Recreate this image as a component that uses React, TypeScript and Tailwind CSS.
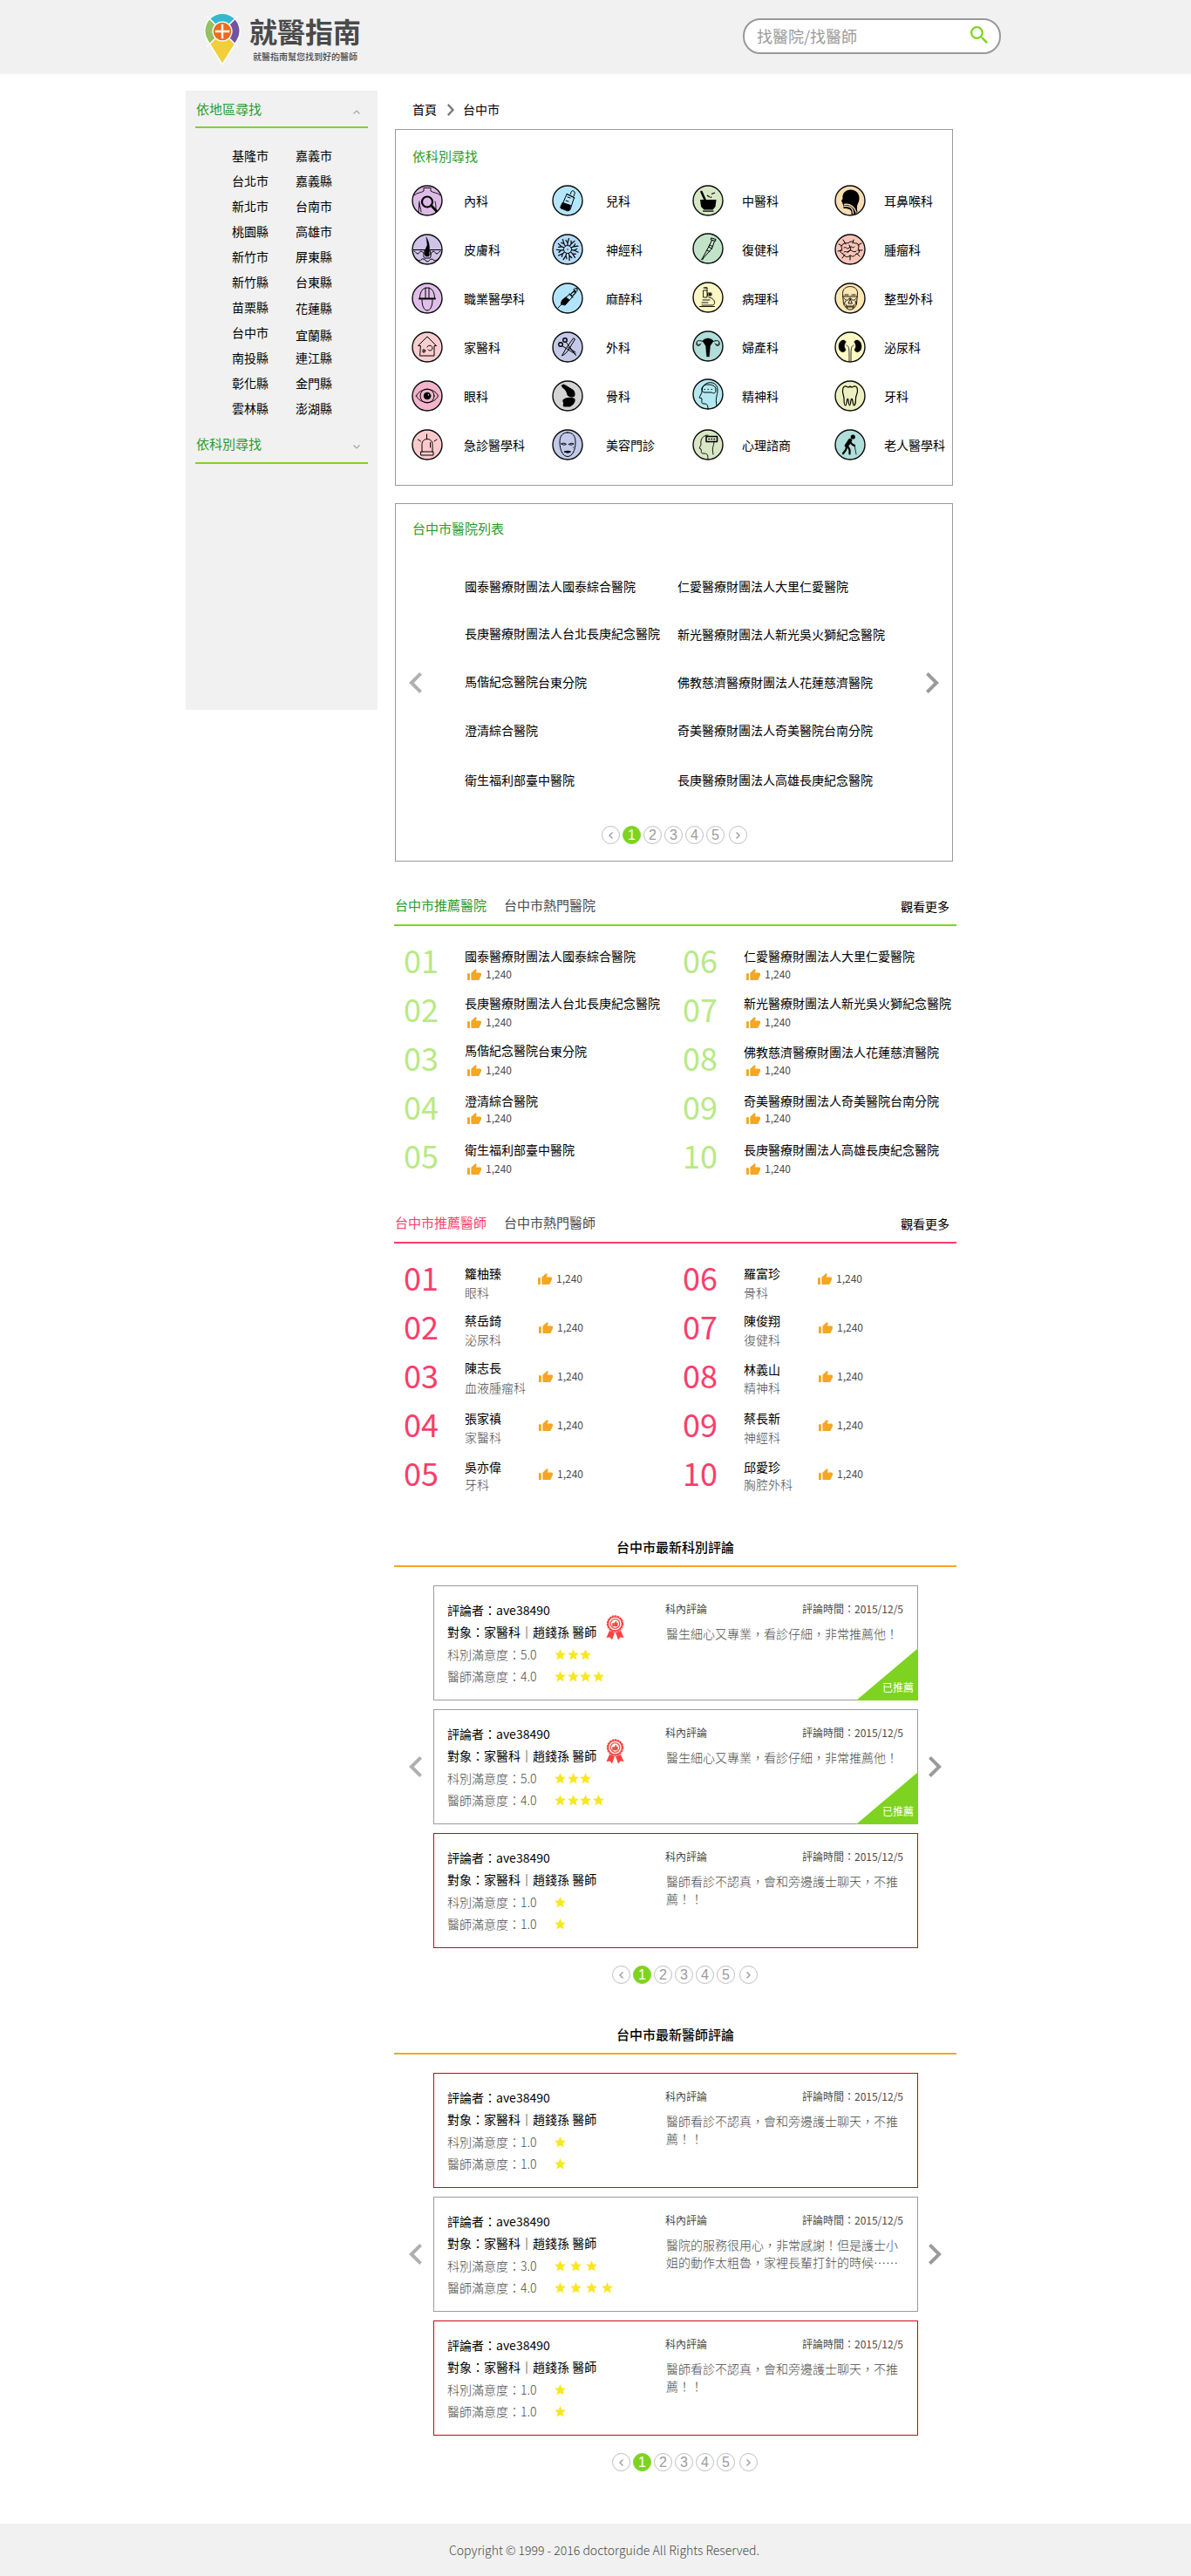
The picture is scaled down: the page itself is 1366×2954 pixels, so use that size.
import React from "react";

type Dept = { name: string; color: string; art: React.ReactNode; nudge?: string };

const k = { fill: "none", stroke: "#000", strokeWidth: 1, strokeLinecap: "round" as const, strokeLinejoin: "round" as const };

const nerveSpokes = [0, 33, 65, 98, 131, 164, 196, 229, 262, 295, 327];

const columns: { cell: string; label: string; items: Dept[] }[] = [
  {
    cell: "w-[161px] shrink-0",
    label: "ml-6",
    items: [
      {
        name: "內科",
        color: "#debbe6",
        art: (
          <g {...k}>
            <path d="M3 12c2-3 9-3 11-5V3.500h8V7c2 2 9 2 11 5M8 32l1-13M11 31c0-4-2-6-2-10M28 31c0-4 0-9-1-12" strokeWidth=".9" />
            <circle cx="18" cy="19.500" r="6" strokeWidth="2.200" />
            <path d="M22.500 23.500l6 6.500" strokeWidth="2.600" />
          </g>
        ),
      },
      {
        name: "皮膚科",
        color: "#d0c3e8",
        art: (
          <g {...k}>
            <path d="M2 18.500h14M21 18.500h13M3 20c2 0 2 3 4 3s2-3 4-3 3 4 5 4M33 20c-2 0-2 3-4 3s-2-3-4-3-2 4-4 4" />
            <path d="M17 4c4 7 4 12 3 22h-4c-2-6 1-10 2-13z" fill="#000" strokeWidth=".4" />
            <path d="M15 19c-1 4-2 8 0 9h6c2-2 1-6 0-9M5 29c2 0 2 2 4 2s2-3 5-2 2 3 4 3 3-3 5-3 2 2 4 2 2-2 4-2" />
          </g>
        ),
      },
      {
        name: "職業醫學科",
        color: "#e0bee9",
        art: (
          <g {...k}>
            <path d="M9.500 18c0-7 3-12 8.500-12s8.500 5 8.500 12M16 6v12M20 6v12M12 20c0 8 3 12 6 12s6-4 6-12" />
            <path d="M9 18.500h18" strokeWidth="2" />
          </g>
        ),
      },
      {
        name: "家醫科",
        color: "#facdd0",
        art: (
          <g {...k}>
            <path d="M10 16.500H7.500L18 6l10.500 10.500H26V28H10z" />
            <path d="M18 18c1-3 6-2 6 1s-3 4-5 2M13 21c2-1 3 1 2 3h-2v-2h3" strokeDasharray="2 .8" />
          </g>
        ),
      },
      {
        name: "眼科",
        color: "#f3b5cc",
        art: (
          <g {...k}>
            <path d="M5.500 18C10 8 26 8 30.500 18 26 28 10 28 5.500 18z" />
            <circle cx="18" cy="18" r="8" />
            <circle cx="18" cy="18" r="3.800" fill="#000" />
            <circle cx="19.400" cy="16.700" r=".7" fill="#fff" stroke="none" />
          </g>
        ),
      },
      {
        name: "急診醫學科",
        color: "#fbcacd",
        art: (
          <g {...k}>
            <path d="M12 26V17.500c0-8 12-8 12 0V26M11 26h14v4H11zM17.500 6v4.500M7.500 12l3 2M29 12l-3 2M21.500 15.500V21" />
          </g>
        ),
      },
    ],
  },
  {
    cell: "w-[161px] shrink-0",
    label: "ml-[26px]",
    items: [
      {
        name: "兒科",
        color: "#b4e6fb",
        art: (
          <g {...k}>
            <path d="M17.500 10.500l8 4-4.500 14-3 1.500-7.500-3z" />
            <path d="M12.500 20.500l9 3-2 6-9.500-3.500z" fill="#000" />
            <path d="M17 10.500l9 4.500M21.500 10.500c0-6 6-4 4.500 0L25 13M18 14l3 1M16 18l3 1" />
          </g>
        ),
      },
      {
        name: "神經科",
        color: "#b3daf8",
        art: (
          <g {...k}>
            <circle cx="18" cy="18" r="4.500" strokeDasharray="2 .6" />
            <circle cx="18" cy="18" r=".7" fill="#000" stroke="none" />
            {nerveSpokes.map((a) => (
              <path key={a} d="M18 13v-2.500l-2-3M18 10.500l1.500-5" transform={`rotate(${a} 18 18)`} strokeWidth="1.200" />
            ))}
          </g>
        ),
      },
      {
        name: "麻醉科",
        color: "#b2e5fb",
        art: (
          <g {...k}>
            <path d="M7 29l4-4M12 20l9-7 3 3-9 10-4-1z" />
            <path d="M12 20l4-3 4 3-5 5-4-1z" fill="#000" />
            <path d="M20 13l4 4M22 13l3-3 2 2-3 3M25 8l3 3M26 7l3-.5v3" strokeWidth="1.100" />
          </g>
        ),
      },
      {
        name: "外科",
        color: "#c4c9e9",
        art: (
          <g {...k}>
            <circle cx="10" cy="15" r="2.300" strokeWidth="1.400" />
            <circle cx="15" cy="10" r="2.300" strokeWidth="1.400" />
            <path d="M11.500 16.500L27 26M16 12l11.500 15.500M18 18l9 6" />
            <path d="M25 8l1.500 1-8 13c-2 3-5 5-7 6l5-9z" />
          </g>
        ),
      },
      {
        name: "骨科",
        color: "#d4d4d4",
        art: (
          <g>
            <path d="M10.500 6l3-1.500 3 1.500 8 5c2 2 3 6 1 8-3 1-7 0-8-2-1-4-2-6-5-8z" />
            <path d="M15.500 20.500c5-1 9-1 11 1 1 4-3 8-6 9h-7l-1-2c2-2-1-4 0-6z" />
          </g>
        ),
      },
      {
        name: "美容門診",
        color: "#c2c9e9",
        art: (
          <g {...k}>
            <path d="M18 4c6 0 9 4 9 11 0 10-4 16.500-9 16.500S9 25 9 15C9 8 12 4 18 4z" />
            <path d="M11 17c2-1.500 4-1 5.500.5-2 1-4 1-5.500-.5zM19.500 17.500c2-1.500 4-1.500 5.500-.5-2 1.500-4 1.500-5.500.5z" />
            <path d="M14.500 26c2-1 5-1 7 0-2 1.500-5 1.500-7 0z" fill="#000" />
            <circle cx="24.500" cy="21" r=".6" fill="#000" stroke="none" />
          </g>
        ),
      },
    ],
  },
  {
    cell: "w-[163px] shrink-0",
    label: "ml-[21px]",
    items: [
      {
        name: "中醫科",
        color: "#d8e8c5",
        art: (
          <g>
            <path d="M9 17h18.500l-1 8-3 3.500h-10L10 25z" />
            <path d="M10.500 8l4 9" stroke="#000" strokeWidth="2.600" strokeLinecap="round" />
            <path d="M12 30.200h12.500M17 12l3 2M21 15l1-1.500M22 10.500l4-1.500" stroke="#000" strokeWidth="1.200" />
          </g>
        ),
      },
      {
        name: "復健科",
        color: "#c3e3c9",
        nudge: "-translate-y-px",
        art: (
          <g {...k}>
            <path d="M22 6l5 1.500-.5 2-5-1.500zM22.500 8.500l-4 8-6.500 12-1.500 2 1 .5 2-3 9-10 3-8.500M18.500 16l4 2M17 20l3 1.500M20 14l3 1.500" />
          </g>
        ),
      },
      {
        name: "病理科",
        color: "#fbf6c3",
        nudge: "-translate-y-px",
        art: (
          <g {...k} strokeWidth=".9">
            <path d="M13 10h4v8h-4zM14 7h3v3M13 7h4M18 13h4v3h-4zM19 18c8 1 8 9 4 9H11M8.500 28.500h17M12 21h8M11 24h7" />
            <circle cx="20" cy="14.500" r="1" fill="#000" />
          </g>
        ),
      },
      {
        name: "婦產科",
        color: "#b1dedb",
        nudge: "-translate-y-px",
        art: (
          <g {...k}>
            <path d="M12 11.500c3-3.500 9-3.500 12 0-1 4-3 4-3.500 7L19.500 30h-3l-1-11.500c-.5-3-2.500-3-3.500-7z" fill="#000" strokeWidth=".3" />
            <path d="M13 13c-4-2-8-2-8 1s4 3 5 1M23 13c4-2 8-2 8 1s-4 3-5 1M5 15c-1 3 3 3 4 1.500M31 15c1 3-3 3-4 1.500" />
          </g>
        ),
      },
      {
        name: "精神科",
        color: "#b2e9f0",
        nudge: "-translate-y-0.5",
        art: (
          <g {...k}>
            <path d="M18 35c0-6-2-6-5-6s-2-3-2-6l-3-1 3-6C10 2 29 1 29 13c0 7-3 9-1 18" />
            <path d="M11 12c0-3 3-5 7-5s9 1 9 6-3 4-5 3H14c-2 0-3-2-3-4z" />
            <path d="M14 12.500h.5M18 12.500h.5M22 12.500h.5" />
          </g>
        ),
      },
      {
        name: "心理諮商",
        color: "#d9e7c5",
        art: (
          <g {...k}>
            <path d="M18 34c0-5-1-6-5-6s-2-2-3-5l-2-1 2-4c-1-6 2-11 8-11M25 14c0 6-3 6-1 15" strokeWidth=".9" />
            <path d="M16 8.500h12.500v6H16z" strokeWidth="1.500" />
            <path d="M19 11.500h.5M22 11.500h.5M25 11.500h.5" strokeWidth="1.500" />
          </g>
        ),
      },
    ],
  },
  {
    cell: "w-[130px] shrink-0",
    label: "ml-[21px]",
    items: [
      {
        name: "耳鼻喉科",
        color: "#f9dcb2",
        art: (
          <g>
            <path d="M10 23l-2-5 1.500-2c-2-14 20-14 19 0 0 5-4 6-2 15l-4 3h-3c1-6-3-7-9-7z" />
            <path d="M10.500 24.500c8-1 11 2 11 9M11 22.500c6-1 11 1 14 9" fill="none" stroke="#f9dcb2" strokeWidth="1.300" />
          </g>
        ),
      },
      {
        name: "腫瘤科",
        color: "#f9c5b9",
        art: (
          <g {...k}>
            <path d="M10 12c3-3 4 0 7-2s4-1 6 1c5-1 6 4 4 6 3 2 1 7-2 6-2 4-5 3-7 2-3 3-7 1-8-2-4-1-4-4-1-6-2-2-1-4 1-5z" />
            <path d="M11 16c3-2 3 3 6 0s4 2 6-1M11 21c3-2 4 2 6-1s5 3 8 0M17 13l2 5-4 3M10 7l3 5M22 7l-1 4M31 11l-4 2M32 19h-5M29 26l-3-3M18 30v-5M9 28l3-4M4 20l5-1M5 12l4 2" />
          </g>
        ),
      },
      {
        name: "整型外科",
        color: "#fce6b2",
        art: (
          <g {...k} strokeWidth=".9">
            <path d="M9.500 12c0-10 17-10 17 0l-1 12c-1 4-4 7-7.500 7s-6-3-7.500-7z" />
            <path d="M9.500 16h17M11 18c2 3 5 3 6 0h2c1 3 4 3 6 0M18 19l-2 5h4zM14 27h8M13 21l-2 4M24 21l1 4M12 14h4M20 14h4" />
            <path d="M13 25l2 5M23 25l-2 5M15 28h6" strokeDasharray="1.500 .8" />
          </g>
        ),
      },
      {
        name: "泌尿科",
        color: "#fdf9c4",
        art: (
          <g {...k}>
            <path d="M13 12c-1-4-8-2-8 5 0 8 7 8 8 4-2-3-2-5 0-9zM23 12c1-4 8-2 8 5 0 8-7 8-8 4 2-3 2-5 0-9z" fill="#000" strokeWidth=".5" />
            <path d="M14 16c3 1 3 3 3 18M22 16c-3 1-3 3-3 18" strokeWidth=".8" />
          </g>
        ),
      },
      {
        name: "牙科",
        color: "#ecf0bf",
        art: (
          <g {...k} strokeWidth="1.200">
            <path d="M9.500 12c0-5 3-6 5-4.500 1.500 1 2 1 3.500-.5 1.500 1.500 2 1.500 3.500.5 2-1.500 5-.5 5 4.500 0 4-2 5-2 9 0 4-1 8-2 8s-1-3-2-7c-.5-1-1-1-1.500 1-.5 4-1 6-1.500 6s-1-2-1.500-6c-.3-2-.8-2-1.300-1-.7 4-1 7-2 7s-1.700-4-1.700-8c0-4-2-5-1.500-9z" />
          </g>
        ),
      },
      {
        name: "老人醫學科",
        color: "#b0dedb",
        art: (
          <g {...k}>
            <circle cx="21.200" cy="9" r="2.600" fill="#000" stroke="none" />
            <path d="M18 13l-4 6" strokeWidth="4.500" />
            <path d="M14 21l-1 3-3 4M16 21l1.500 3v4.500M18 15l3 3 2 1" strokeWidth="2.200" />
            <path d="M23 18l2 11" strokeWidth=".8" />
          </g>
        ),
      },
    ],
  },
];

function DeptIcon({ d }: { d: Dept }) {
  return (
    <svg viewBox="0 0 36 36" className={`h-9 w-9 shrink-0 ${d.nudge ?? ""}`}>
      <circle cx="18" cy="18" r="17" fill={d.color} stroke="#0a0a0a" strokeWidth="1.400" />
      {d.art}
    </svg>
  );
}

function Chevron({ left, className }: { left?: boolean; className: string }) {
  return (
    <svg viewBox="8.590 6 7.410 12" preserveAspectRatio="none" className={className} fill="currentColor">
      <path d={left ? "M14.590 6L16 7.410 11.420 12 16 16.590 14.590 18l-6-6z" : "M10 6L8.590 7.410 13.170 12l-4.580 4.590L10 18l6-6z"} />
    </svg>
  );
}

function Thumb() {
  return (
    <svg viewBox="1 1 22 20" preserveAspectRatio="none" className="h-[13px] w-4 shrink-0 text-[#f5a623]" fill="currentColor">
      <path d="M1 21h4V9H1v12zm22-11c0-1.100-.9-2-2-2h-6.310l.95-4.570.03-.32c0-.41-.17-.79-.44-1.060L14.170 1 7.590 7.590C7.220 7.950 7 8.450 7 9v10c0 1.100.9 2 2 2h9c.83 0 1.540-.5 1.840-1.220l3.020-7.050c.09-.23.14-.47.14-.73v-1.910l-.01-.01L23 10z" />
    </svg>
  );
}

function Likes({ className }: { className: string }) {
  return (
    <div className={`flex h-[14px] items-center ${className}`}>
      <Thumb />
      <span className="ml-[5px] text-[12px] leading-[14px] text-[#4a4a4a]">1,240</span>
    </div>
  );
}

function Logo() {
  return (
    <svg viewBox="0 0 42 61" className="h-[61px] w-[42px]">
      <defs>
        <clipPath id="pin">
          <path d="M21 58.500L4.600 32A19.500 19.500 0 1 1 37.400 32z" />
        </clipPath>
      </defs>
      <path d="M21 61L3 33A21 21 0 1 1 39 33z" fill="#fff" />
      <g clipPath="url(#pin)">
        <path d="M21 22L-4-3h50z" fill="#33b9cf" />
        <path d="M21 22L-4-3v50z" fill="#95c162" />
        <path d="M21 22L46-3v50z" fill="#7155a3" />
        <path d="M21 22L-16 59h74z" fill="#f2ce3b" />
      </g>
      <path d="M3 4l36 36M39 4L3 40" stroke="#fff" strokeWidth="1.500" />
      <circle cx="21" cy="22" r="11.600" fill="#fff" />
      <circle cx="21" cy="22" r="10.300" fill="#ec6c1d" />
      <path d="M21 13.800v16.400M12.800 22h16.400" stroke="#fff" strokeWidth="2.400" />
    </svg>
  );
}

function Pager({ className }: { className: string }) {
  return (
    <nav className={`flex gap-[3px] font-['Liberation_Sans'] text-[16px] leading-[20px] text-[#9b9b9b] ${className}`}>
      <span className="flex h-[21px] w-[21px] items-center justify-center rounded-full border border-[#bdbdbd]">
        <Chevron left className="h-2 w-[5px]" />
      </span>
      {["1", "2", "3", "4", "5"].map((n) => (
        <span
          key={n}
          className={
            n === "1"
              ? "h-[21px] w-[21px] rounded-full border border-[#7ed321] bg-[#7ed321] text-center text-white"
              : "h-[21px] w-[21px] rounded-full border border-[#bdbdbd] text-center"
          }
        >
          {n}
        </span>
      ))}
      <span className="ml-0.5 flex h-[21px] w-[21px] items-center justify-center rounded-full border border-[#bdbdbd]">
        <Chevron className="h-2 w-[5px]" />
      </span>
    </nav>
  );
}

const citiesLeft = ["基隆市", "台北市", "新北市", "桃園縣", "新竹市", "新竹縣", "苗栗縣", "台中市", "南投縣", "彰化縣", "雲林縣"];
const citiesRight = ["嘉義市", "嘉義縣", "台南市", "高雄市", "屏東縣", "台東縣", "花蓮縣", "宜蘭縣", "連江縣", "金門縣", "澎湖縣"];

function Sidebar() {
  return (
    <aside className="mt-[19px] h-[710px] w-[220px] shrink-0 bg-[#f1f1f1] pt-[11px] pl-[11px]">
      <div className="flex h-[32px] w-[198px] justify-between border-b-2 border-[#7ed321] pl-px text-[15px] leading-5 text-[#289b2c]">
        依地區尋找
        <svg viewBox="0 0 8 5" className="mt-[11px] mr-[9px] h-[5px] w-2" fill="none" stroke="#a5a5a5" strokeWidth="1.200">
          <path d="M.5 4.500L4 1l3.500 3.500" />
        </svg>
      </div>
      <div className="flex gap-[31px] pt-[17px] pl-[42px] text-[14px] leading-[29px] text-black">
        <ul className="w-[42px]">
          {citiesLeft.map((c) => (
            <li key={c}>{c}</li>
          ))}
        </ul>
        <ul className="w-[42px]">
          {citiesRight.map((c) => (
            <li key={c} className={c === "花蓮縣" ? "translate-y-px" : c === "宜蘭縣" ? "translate-y-[3px]" : ""}>
              {c}
            </li>
          ))}
        </ul>
      </div>
      <div className="mt-[16px] flex h-[33px] w-[198px] justify-between border-b-2 border-[#7ed321] pl-px text-[15px] leading-5 text-[#289b2c]">
        依科別尋找
        <svg viewBox="0 0 8 5" className="mt-[11px] mr-[9px] h-[5px] w-2" fill="none" stroke="#a5a5a5" strokeWidth="1.200">
          <path d="M.5.5L4 4 7.500.5" />
        </svg>
      </div>
    </aside>
  );
}

type Hospital = { name: React.ReactNode; list: string; rank: string; likes: string };

const mackay = (
  <>
    馬偕紀念醫院<span className="relative top-px">台東分院</span>
  </>
);

const hospitalsLeft: Hospital[] = [
  { name: "國泰醫療財團法人國泰綜合醫院", list: "mt-0", rank: "mt-3.5", likes: "mt-1" },
  { name: "長庚醫療財團法人台北長庚紀念醫院", list: "mt-[34px]", rank: "mt-3", likes: "mt-[5px]" },
  { name: mackay, list: "mt-[35px]", rank: "mt-2.5", likes: "mt-1.5" },
  { name: "澄清綜合醫院", list: "mt-9", rank: "mt-3", likes: "mt-[3px]" },
  { name: "衛生福利部臺中醫院", list: "mt-[37px]", rank: "mt-3", likes: "mt-[5px]" },
];
const hospitalsRight: Hospital[] = [
  { name: "仁愛醫療財團法人大里仁愛醫院", list: "mt-0", rank: "mt-3.5", likes: "mt-1" },
  { name: "新光醫療財團法人新光吳火獅紀念醫院", list: "mt-[35px]", rank: "mt-3", likes: "mt-[5px]" },
  { name: "佛教慈濟醫療財團法人花蓮慈濟醫院", list: "mt-[35px]", rank: "mt-3", likes: "mt-1" },
  { name: "奇美醫療財團法人奇美醫院台南分院", list: "mt-[35px]", rank: "mt-3", likes: "mt-[3px]" },
  { name: "長庚醫療財團法人高雄長庚紀念醫院", list: "mt-[37px]", rank: "mt-3", likes: "mt-[5px]" },
];

type Doctor = { name: string; dept: string; top: string; gap: string };
const doctorsLeft: Doctor[] = [
  { name: "籮柚臻", dept: "眼科", top: "mt-3.5", gap: "mt-0.5" },
  { name: "蔡岳錡", dept: "泌尿科", top: "mt-3", gap: "mt-0.5" },
  { name: "陳志長", dept: "血液腫瘤科", top: "mt-2.5", gap: "mt-[3px]" },
  { name: "張家禛", dept: "家醫科", top: "mt-3", gap: "mt-0.5" },
  { name: "吳亦偉", dept: "牙科", top: "mt-3", gap: "mt-0" },
];
const doctorsRight: Doctor[] = [
  { name: "羅富珍", dept: "骨科", top: "mt-3.5", gap: "mt-0.5" },
  { name: "陳俊翔", dept: "復健科", top: "mt-3", gap: "mt-0.5" },
  { name: "林義山", dept: "精神科", top: "mt-3", gap: "mt-px" },
  { name: "蔡長新", dept: "神經科", top: "mt-3", gap: "mt-0.5" },
  { name: "邱愛珍", dept: "胸腔外科", top: "mt-3", gap: "mt-0" },
];

function RankNumber({ n, className }: { n: number; className: string }) {
  return <span className={`w-[70px] shrink-0 text-[36px] leading-[56px] ${className}`}>{String(n).padStart(2, "0")}</span>;
}

function HospitalRanks({ items, start }: { items: Hospital[]; start: number }) {
  return (
    <ol className="w-[320px] shrink-0">
      {items.map((h, i) => (
        <li key={i} className="flex h-14">
          <RankNumber n={start + i} className="text-[#b8e986]" />
          <div>
            <p className={`h-5 text-[14px] leading-5 whitespace-nowrap text-black ${h.rank}`}>{h.name}</p>
            <Likes className={`pl-[3px] ${h.likes}`} />
          </div>
        </li>
      ))}
    </ol>
  );
}

function DoctorRanks({ items, start }: { items: Doctor[]; start: number }) {
  return (
    <ol className={start === 1 ? "w-[320px] shrink-0" : "w-[320px] shrink-0"}>
      {items.map((d, i) => (
        <li key={d.name} className="flex h-14">
          <RankNumber n={start + i} className="text-[#fa3e6b]" />
          <div className={start === 1 ? "w-[84px] text-[14px] leading-5" : "w-[85px] text-[14px] leading-5"}>
            <p className={`h-5 text-black ${d.top}`}>{d.name}</p>
            <p className={`h-5 font-light text-[#4a4a4a] ${d.gap}`}>{d.dept}</p>
          </div>
          <Likes className={i === 0 ? "mt-[23px]" : "mt-[23px] ml-px"} />
        </li>
      ))}
    </ol>
  );
}

function TabBar({ active, other, className, activeColor }: { active: string; other: string; className: string; activeColor: string }) {
  return (
    <div className={`flex h-[34px] border-b-2 pr-2 pl-px text-[15px] leading-5 text-[#4a4a4a] ${className}`}>
      <span className={activeColor}>{active}</span>
      <span className="ml-5">{other}</span>
      <span className="mt-px ml-auto text-[14px] text-black">觀看更多</span>
    </div>
  );
}

function Stars({ count, wide }: { count: number; wide?: boolean }) {
  return (
    <span className={wide ? "ml-[21px] flex gap-[5px]" : "ml-[21px] flex gap-[1.500px]"}>
      {Array.from({ length: count }, (_, i) => (
        <svg key={i} viewBox="2 2 20 19" className="h-[12.500px] w-[13px]" fill="#f8e71c">
          <path d="M12 17.270L18.180 21l-1.640-7.030L22 9.240l-7.190-.61L12 2 9.190 8.630 2 9.240l5.460 4.730L5.820 21z" />
        </svg>
      ))}
    </span>
  );
}

function Medal() {
  return (
    <svg viewBox="0 0 21 29" className="mt-[-9px] ml-[11px] h-[29px] w-[21px] shrink-0">
      <path d="M4 18l-3.500 8 4-.5L7 28.500l3-8.500zM17 18l3.500 8-4-.5-2.500 3-3-8.500z" fill="#fb4343" />
      <circle cx="10.500" cy="10" r="9" fill="none" stroke="#fb4343" strokeWidth="1.500" strokeDasharray="2.400 .8" />
      <circle cx="10.500" cy="10" r="8" fill="#fff" stroke="#fb4343" strokeWidth="1.500" />
      <circle cx="10.500" cy="10" r="5.300" fill="none" stroke="#fb4343" strokeWidth="1.200" />
      <path d="M7.500 9.500h1.500v3.500H7.500zM9.500 9.500l2-2.500.6.500-.4 1.800h2l-.7 3.700H9.500z" fill="#fb4343" stroke="#fb4343" strokeWidth=".5" />
    </svg>
  );
}

type Review = { dept: number; doc: number; deptScore: string; docScore: string; text: string; good?: boolean; bad?: boolean; wide?: boolean };

function ReviewCard({ r }: { r: Review }) {
  return (
    <article className={`relative flex h-[132px] w-[556px] shrink-0 border pt-[17px] pl-[15px] ${r.bad ? "border-[#d0021b]" : "border-[#9b9b9b]"}`}>
      <div className="w-[250px] shrink-0 text-[14px] text-black">
        <p className="h-[25px] leading-5">評論者：ave38490</p>
        <div className="flex h-[26px] leading-5 whitespace-nowrap">
          <span>對象：家醫科｜趙錢孫 醫師</span>
          {r.good && <Medal />}
        </div>
        <div className="flex h-[25px] items-start font-light whitespace-nowrap text-[#4a4a4a]">
          <span className="w-[102px] leading-5">科別滿意度：{r.deptScore}</span>
          <span className="mt-1">
            <Stars count={r.dept} wide={r.wide} />
          </span>
        </div>
        <div className="flex h-5 items-start font-light whitespace-nowrap text-[#4a4a4a]">
          <span className="w-[102px] leading-5">醫師滿意度：{r.docScore}</span>
          <span className="mt-1">
            <Stars count={r.doc} wide={r.wide} />
          </span>
        </div>
      </div>
      <div className="w-[273px] shrink-0">
        <div className="flex justify-between text-[12px] leading-[18px] text-[#4a4a4a]">
          <span>科內評論</span>
          <span>評論時間：2015/12/5</span>
        </div>
        <p className="mt-[9px] ml-px w-[268px] text-[14px] leading-5 font-light text-[#4a4a4a]">{r.text}</p>
      </div>
      {r.good && (
        <div className="absolute -right-px -bottom-px flex h-[60px] w-[71px] items-end justify-end bg-[#7ed321] pr-[5px] pb-[7px] text-[12px] leading-4 text-white [clip-path:polygon(100%_0,100%_100%,0_100%)]">
          已推薦
        </div>
      )}
    </article>
  );
}

const good: Review = { dept: 3, doc: 4, deptScore: "5.0", docScore: "4.0", text: "醫生細心又專業，看診仔細，非常推薦他！", good: true };
const bad: Review = { dept: 1, doc: 1, deptScore: "1.0", docScore: "1.0", text: "醫師看診不認真，會和旁邊護士聊天，不推薦！！", bad: true };
const mixed: Review = {
  dept: 3,
  doc: 4,
  deptScore: "3.0",
  docScore: "4.0",
  text: "醫院的服務很用心，非常感謝！但是護士小姐的動作太粗魯，家裡長輩打針的時候⋯⋯",
  wide: true,
};

function Reviews({ title, reviews }: { title: string; reviews: Review[] }) {
  return (
    <section className="mt-12">
      <h2 className="h-[33px] border-b-2 border-[#f5a623] text-center text-[15px] leading-5 font-medium text-black">{title}</h2>
      <div className="mt-[21px] flex items-center pl-[17px]">
        <Chevron left className="h-6 w-[15px] shrink-0 text-[#b0b0b0]" />
        <div className="ml-[13px] space-y-2.5">
          {reviews.map((r, i) => (
            <ReviewCard key={i} r={r} />
          ))}
        </div>
        <Chevron className="ml-3 h-6 w-[15px] shrink-0 text-[#9b9b9b]" />
      </div>
      <Pager className="mt-5 ml-[250px]" />
    </section>
  );
}

export default function App() {
  return (
    <div className="h-[2954px] w-[1366px] bg-white font-['Noto_Sans_CJK_TC',sans-serif]">
      <header className="flex h-[85px] bg-[#f1f1f1] pl-[234px]">
        <div className="mt-3.5">
          <Logo />
        </div>
        <div className="ml-[10px] w-[128px] pt-[16px] text-[#4a4a4a]">
          <h1 className="text-[32px] leading-[38px] font-bold whitespace-nowrap">就醫指南</h1>
          <p className="mt-[3px] ml-[4px] text-[10px] leading-4 font-medium whitespace-nowrap">就醫指南幫您找到好的醫師</p>
        </div>
        <div className="mt-[21px] ml-[438px] flex h-[41px] w-[296px] justify-between rounded-[20px] border-2 border-[#999] bg-white pr-[13px] pl-[14px] text-[18px] leading-[36px] text-[#9b9b9b]">
          找醫院/找醫師
          <svg viewBox="3 3 17.490 17.490" className="mt-[7px] h-5 w-5" fill="#7ed321">
            <path d="M15.500 14h-.79l-.28-.27A6.471 6.471 0 0 0 16 9.500 6.500 6.500 0 1 0 9.500 16c1.610 0 3.090-.59 4.230-1.570l.27.28v.79l5 4.990L20.490 19l-4.990-5zm-6 0C7.010 14 5 11.990 5 9.500S7.010 5 9.500 5 14 7.010 14 9.500 11.990 14 9.500 14z" />
          </svg>
        </div>
      </header>

      <div className="flex h-[2809px] pl-[213px]">
        <Sidebar />
        <main className="ml-[19px] w-[645px]">
          <div className="mt-[30px] flex h-[33px] pl-[21px] text-[14px] leading-5 text-black">
            首頁
            <Chevron className="mt-1 mr-[10px] ml-3 h-[14px] w-2 text-[#777]" />
            台中市
          </div>

          <section className="ml-px h-[409px] w-[640px] border border-[#9b9b9b] pt-5">
            <h2 className="pl-[19px] text-[15px] leading-5 text-[#289b2c]">依科別尋找</h2>
            <div className="mt-[13px] flex pl-[18px]">
              {columns.map((c, i) => (
                <ul key={i} className={c.cell}>
                  {c.items.map((d) => (
                    <li key={d.name} className="flex h-14 items-center text-[14px] whitespace-nowrap text-black">
                      <DeptIcon d={d} />
                      <span className={c.label}>{d.name}</span>
                    </li>
                  ))}
                </ul>
              ))}
            </div>
          </section>

          <section className="mt-5 ml-px h-[411px] w-[640px] border border-[#9b9b9b] pt-[18px]">
            <h2 className="pl-[19px] text-[15px] leading-5 text-[#289b2c]">台中市醫院列表</h2>
            <div className="mt-[46px] flex h-[242px] items-center pl-[15px]">
              <Chevron left className="mt-[-1px] h-6 w-[15px] shrink-0 text-[#b0b0b0]" />
              <div className="ml-[49px] flex w-[529px] shrink-0 self-start text-[14px] leading-5 whitespace-nowrap text-black">
                <ul className="w-[244px]">
                  {hospitalsLeft.map((h, i) => (
                    <li key={i} className={h.list}>{h.name}</li>
                  ))}
                </ul>
                <ul>
                  {hospitalsRight.map((h, i) => (
                    <li key={i} className={h.list}>{h.name}</li>
                  ))}
                </ul>
              </div>
              <Chevron className="mt-[-1px] h-6 w-[15px] shrink-0 text-[#9b9b9b]" />
            </div>
            <Pager className="mt-[43px] ml-[236px]" />
          </section>

          <TabBar active="台中市推薦醫院" other="台中市熱門醫院" className="mt-10 border-[#7ed321]" activeColor="text-[#289b2c]" />
          <div className="mt-2.5 flex pl-[11px]">
            <HospitalRanks items={hospitalsLeft} start={1} />
            <HospitalRanks items={hospitalsRight} start={6} />
          </div>

          <TabBar active="台中市推薦醫師" other="台中市熱門醫師" className="mt-10 border-[#fa3e6b]" activeColor="text-[#fa3e6b]" />
          <div className="mt-2.5 flex pl-[11px]">
            <DoctorRanks items={doctorsLeft} start={1} />
            <DoctorRanks items={doctorsRight} start={6} />
          </div>

          <Reviews title="台中市最新科別評論" reviews={[good, good, bad]} />
          <Reviews title="台中市最新醫師評論" reviews={[bad, mixed, bad]} />
        </main>
      </div>

      <footer className="h-[60px] bg-[#f1f1f1] pt-5 pl-[515px] text-[14px] leading-5 font-light text-[#4a4a4a]">
        Copyright © 1999 - 2016 doctorguide All Rights Reserved.
      </footer>
    </div>
  );
}
